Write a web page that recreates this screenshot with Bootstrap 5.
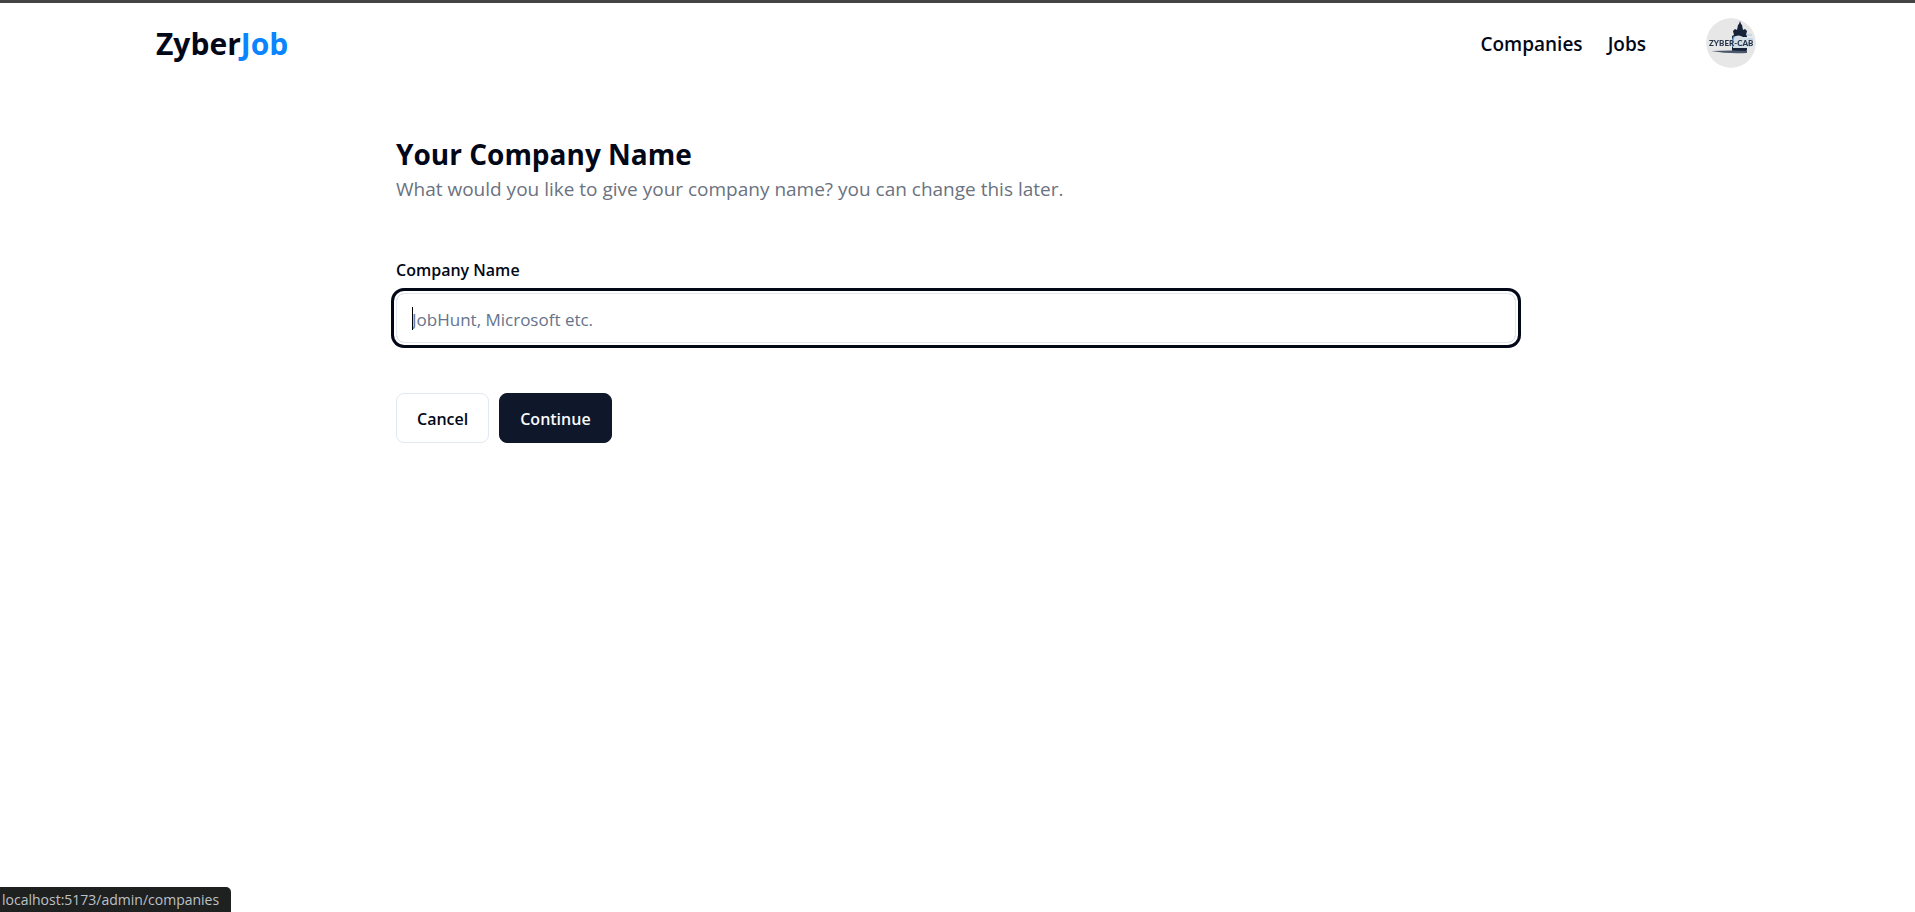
<!DOCTYPE html>
<html lang="en">
<head>
<meta charset="utf-8">
<meta name="viewport" content="width=device-width, initial-scale=1">
<title>ZyberJob</title>
<link href="https://cdn.jsdelivr.net/npm/bootstrap@5.3.0/dist/css/bootstrap.min.css" rel="stylesheet">
<style>
  :root { --ink: #020817; --line: #e2e8f0; --muted: #6b7280; }
  body { font-family: "Open Sans", "Noto Sans", sans-serif; color: var(--ink); background: #fff; border-top: 3px solid #444; padding-right: 3px; }
  .site-nav { max-width: 1600px; height: 80px; }
  .brand-name { font-size: 30px; font-weight: 700; line-height: 36px; padding-top: 2px; color: var(--ink); }
  .brand-name span { color: #0a84ff; }
  .menu-link { font-size: 19px; font-weight: 600; line-height: 28px; color: var(--ink); }
  .menu-list { gap: 25px; padding-top: 2px; }
  .avatar { width: 50px; height: 50px; margin-left: 60px; }
  .company-form { max-width: 1120px; padding-top: 51px; }
  .page-title { font-size: 28px; font-weight: 700; line-height: 40px; }
  .page-hint { font-size: 19px; line-height: 30px; color: var(--muted); margin-bottom: 54px; }
  .field-label { font-size: 16px; font-weight: 600; line-height: 24px; margin-bottom: 11px; }
  .name-input, .name-input:focus { height: 50px; font-size: 17px; padding: 11px 15px 9px; border: 1px solid var(--line); border-radius: 8px; box-shadow: 0 0 0 2px #fff, 0 0 0 5px var(--ink); caret-color: transparent; }
  .name-input::placeholder { color: #64748b; opacity: 1; }
  .caret { left: 16px; top: 14px; width: 1px; height: 23px; background: #000; }
  .actions { gap: 10px; margin-top: 50px; }
  .act { height: 50px; padding: 2px 20px 0; font-size: 16px; font-weight: 600; border-radius: 8px; }
  .act-cancel { border-color: var(--line); color: var(--ink); background: #fff; }
  .act-go { background: #0f172a; color: #f8fafc; border-color: #0f172a; }
  .status-url { height: 25px; padding: 1px 12px 0 2px; font-size: 14px; line-height: 24px; background: #1f2020; color: #bdc1c6; border-radius: 0 5px 0 0; }
</style>
</head>
<body>
<header>
  <nav class="site-nav mx-auto d-flex align-items-center justify-content-between">
    <a href="#" class="brand-name text-decoration-none">Zyber<span>Job</span></a>
    <div class="d-flex align-items-center">
      <ul class="menu-list list-unstyled d-flex mb-0">
        <li><a href="#" class="menu-link text-decoration-none">Companies</a></li>
        <li><a href="#" class="menu-link text-decoration-none">Jobs</a></li>
      </ul>
      <button type="button" class="avatar btn p-0 border-0 rounded-circle overflow-hidden d-flex" aria-label="Account">
        <svg width="50" height="50" viewBox="0 0 50 50" aria-hidden="true">
          <defs><filter id="soft"><feGaussianBlur stdDeviation="0.4"/></filter></defs>
          <circle cx="25" cy="25" r="25" fill="#e7e7e7"/>
          <g filter="url(#soft)">
            <path d="M40 17h6M41 21h6M41 25h5M40 28h5" stroke="#b5d3e8" stroke-width="1.5"/>
            <path d="M28 17l-1-4 2-2 2 1 1-5 1-1 1-3 1 3 1 1 1 5 2-1 2 2-1 4 1 1v14l-2 3h-2l-1-2h-6l-1 2h-2l-1-3V18z" fill="#142238"/>
            <path d="M27 19q6-3 10 0h4v11H27z" fill="#d3dee7"/>
            <path d="M28 19q-3 5-1 10" stroke="#5d9ccc" stroke-width="1.5" fill="none"/>
            <path d="M5 33q20-1 36 0v2Q22 36 5 33z" fill="#4b586c"/>
            <text x="3" y="28" font-family="Lato, sans-serif" font-size="8" font-weight="900" fill="#26344b">ZYBER-CAB</text>
          </g>
        </svg>
      </button>
    </div>
  </nav>
</header>
<main class="company-form mx-auto">
  <h1 class="page-title mb-0">Your Company Name</h1>
  <p class="page-hint">What would you like to give your company name? you can change this later.</p>
  <form>
    <label for="company" class="field-label d-block">Company Name</label>
    <div class="position-relative">
      <input id="company" type="text" class="name-input form-control" placeholder="JobHunt, Microsoft etc.">
      <span class="caret position-absolute"></span>
    </div>
    <div class="actions d-flex">
      <button type="button" class="act act-cancel btn">Cancel</button>
      <button type="button" class="act act-go btn">Continue</button>
    </div>
  </form>
</main>
<div class="status-url position-fixed bottom-0 start-0">localhost:5173/admin/companies</div>
<script src="https://cdn.jsdelivr.net/npm/bootstrap@5.3.0/dist/js/bootstrap.bundle.min.js"></script>
</body>
</html>
